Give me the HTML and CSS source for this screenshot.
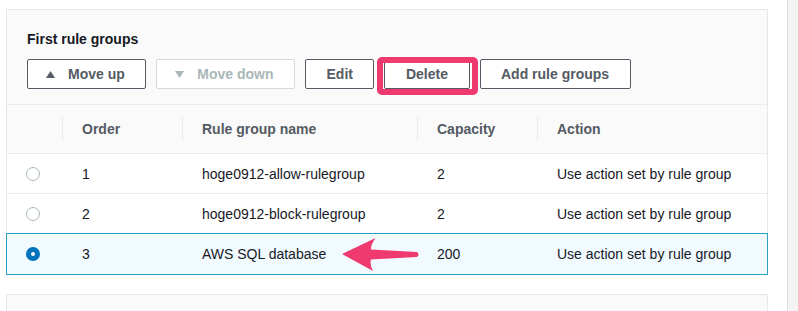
FILE: index.html
```html
<!DOCTYPE html>
<html lang="en">
<head>
<meta charset="utf-8">
<title>First rule groups</title>
<link rel="stylesheet" href="styles.css">
</head>
<body>
<div class="page">
  <main class="main">
    <section class="panel">
      <div class="panel-head">
        <h2 class="title">First rule groups</h2>
        <div class="actions">
          <button class="btn btn-icon" type="button">
            <svg class="tri" width="9" height="7" viewBox="0 0 9 7"><polygon points="4.5,0 9,7 0,7"/></svg>
            Move up
          </button>
          <button class="btn btn-icon" type="button" disabled>
            <svg class="tri" width="9" height="7" viewBox="0 0 9 7"><polygon points="0,0 9,0 4.5,7"/></svg>
            Move down
          </button>
          <button class="btn" type="button">Edit</button>
          <button class="btn btn-marked" type="button">Delete</button>
          <button class="btn" type="button">Add rule groups</button>
        </div>
      </div>
      <div class="table">
        <div class="row row-head">
          <div class="cell cell-radio"></div>
          <div class="cell">Order</div>
          <div class="cell">Rule group name</div>
          <div class="cell">Capacity</div>
          <div class="cell">Action</div>
        </div>
        <div class="row">
          <div class="cell cell-radio"><span class="radio"></span></div>
          <div class="cell">1</div>
          <div class="cell">hoge0912-allow-rulegroup</div>
          <div class="cell">2</div>
          <div class="cell">Use action set by rule group</div>
        </div>
        <div class="row">
          <div class="cell cell-radio"><span class="radio"></span></div>
          <div class="cell">2</div>
          <div class="cell">hoge0912-block-rulegroup</div>
          <div class="cell">2</div>
          <div class="cell">Use action set by rule group</div>
        </div>
        <div class="row row-selected">
          <div class="cell cell-radio"><span class="radio radio-on"></span></div>
          <div class="cell">3</div>
          <div class="cell">AWS SQL database</div>
          <div class="cell">200</div>
          <div class="cell">Use action set by rule group</div>
        </div>
      </div>
      <svg class="arrow" width="95" height="50" viewBox="330 230 95 50">
        <path d="M342,254 L375.5,238 Q370.5,245 371,249.5 L417,252 Q420,254.5 417,257 L371,259.5 Q369.5,265 373,271 Z"/>
      </svg>
    </section>
    <section class="panel panel-next"></section>
  </main>
  <aside class="side"></aside>
</div>
</body>
</html>
```

FILE: styles.css
```css
* {
  box-sizing: border-box;
}

html, body {
  margin: 0;
  padding: 0;
  background: #ffffff;
}

body {
  font-family: "Liberation Sans", Arial, sans-serif;
  font-size: 14px;
  line-height: 20px;
  color: #16191f;
}

.page {
  display: flex;
  width: 798px;
  height: 311px;
  overflow: hidden;
}

.main {
  flex: 1;
  padding: 9px 19px 0 6px;
}

.side {
  width: 11px;
  border-left: 1px solid #dcdfdf;
  background: #f3f3f3;
}

.panel {
  position: relative;
  background: #fafafa;
  border: 1px solid #e6e8e8;
}

.panel-next {
  margin-top: 19px;
  height: 40px;
}

.panel-head {
  padding: 19px 20px 15px 20px;
  border-bottom: 1px solid #eaeded;
}

.title {
  margin: 0;
  font-size: 14px;
  line-height: 20px;
  font-weight: bold;
  color: #16191f;
}

.actions {
  display: flex;
  gap: 10px;
  margin-top: 10px;
}

.btn {
  display: inline-flex;
  align-items: center;
  height: 30px;
  padding: 0 20.5px;
  border: 1px solid #545b64;
  border-radius: 2px;
  background: #ffffff;
  font-family: "Liberation Sans", Arial, sans-serif;
  font-size: 14px;
  font-weight: bold;
  color: #545b64;
  white-space: nowrap;
}

.btn-icon {
  padding-left: 18px;
}

.tri {
  margin-right: 13px;
  fill: #545b64;
}

.btn:disabled {
  border-color: #d5dbdb;
  color: #aab7b8;
}

.btn:disabled .tri {
  fill: #aab7b8;
}

.btn-marked {
  position: relative;
}

.btn-marked::after {
  content: "";
  position: absolute;
  left: -8px;
  right: -9px;
  top: -3px;
  bottom: -7px;
  border: 6px solid #ef3a6f;
  border-radius: 5px;
}

.table {
  background: #ffffff;
}

.row {
  display: grid;
  grid-template-columns: 55px 120px 235px 120px 1fr;
  align-items: center;
  height: 40px;
  border-bottom: 1px solid #eaeded;
  background: #ffffff;
}

.row-head {
  height: 49px;
  padding: 12px 0;
  background: #fafafa;
  font-weight: bold;
  color: #545b64;
}

.row-head .cell {
  height: 24px;
  line-height: 24px;
  border-left: 1px solid #eaeded;
  padding-left: 19px;
}

.row-head .cell-radio {
  border-left: none;
}

.cell {
  padding-left: 20px;
  white-space: nowrap;
}

.cell-radio {
  padding-left: 19px;
  display: flex;
  align-items: center;
}

.radio {
  display: block;
  width: 14px;
  height: 14px;
  border-radius: 50%;
  border: 1px solid #aab7b8;
  background: #ffffff;
}

.radio-on {
  border: 5px solid #0073bb;
}

.row-selected {
  height: 42px;
  margin: -1px -1px -1px -1px;
  border: 1px solid #2ea0c6;
  background: #f1faff;
}

.arrow {
  position: absolute;
  left: 323px;
  top: 220px;
  fill: #ef3a6f;
}
```
